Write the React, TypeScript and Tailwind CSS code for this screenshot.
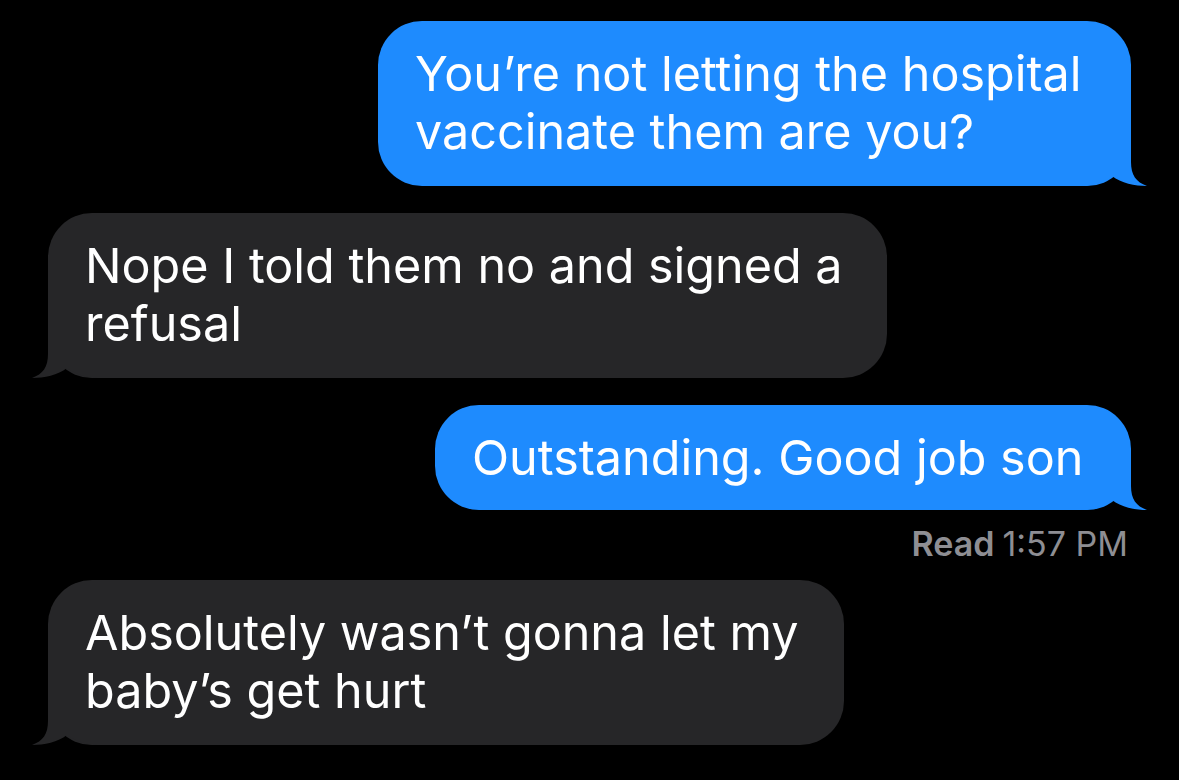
import type { ReactNode } from "react";

function Tail({ side, color }: { side: "left" | "right"; color: string }) {
  return (
    <svg
      width="67"
      height="60"
      viewBox="0 0 67 60"
      className={
        side === "right"
          ? "absolute bottom-0 right-[-16px]"
          : "absolute bottom-0 left-[-16px] -scale-x-100"
      }
    >
      <path
        d="M0,0 L51,0 L51,36 C51,49 56,56 67,60 C55,60 41,57 32,50 C24,56 12,60 0,60 Z"
        fill={color}
      />
    </svg>
  );
}

function Bubble({
  side,
  width,
  single,
  children,
}: {
  side: "left" | "right";
  width: string;
  single?: boolean;
  children: ReactNode;
}) {
  const blue = side === "right";
  return (
    <div className={blue ? "flex justify-end" : "flex justify-start"}>
      <div
        className={`relative rounded-[44px] pl-[37px] pr-6 pt-6 text-[48.5px] leading-[58px] text-white ${width} ${
          single ? "pb-[23px]" : "pb-[25px]"
        } ${blue ? "bg-[#1e8bfe]" : "bg-[#262628]"}`}
      >
        <Tail side={side} color={blue ? "#1e8bfe" : "#262628"} />
        <div className="relative whitespace-nowrap">{children}</div>
      </div>
    </div>
  );
}

export default function App() {
  return (
    <div
      className="min-h-[780px] w-[1179px] bg-black px-12 pt-[21px]"
      style={{ fontFamily: "Inter, 'Liberation Sans', sans-serif" }}
    >
      <Bubble side="right" width="w-[753px]">
        You’re not letting the hospital
        <br />
        vaccinate them are you?
      </Bubble>
      <div className="mt-[27px]">
        <Bubble side="left" width="w-[839px]">
          Nope I told them no and signed a
          <br />
          refusal
        </Bubble>
      </div>
      <div className="mt-[27px]">
        <Bubble side="right" width="w-[696px]" single>
          Outstanding. Good job son
        </Bubble>
      </div>
      <div className="mt-[14px] mb-[16px] flex justify-end pr-[3px] text-[34px] leading-[40px] text-[#8e8e93]">
        <span className="font-semibold">Read</span>
        <span className="ml-[8px]">1:57 PM</span>
      </div>
      <Bubble side="left" width="w-[796px]">
        Absolutely wasn’t gonna let my
        <br />
        baby’s get hurt
      </Bubble>
    </div>
  );
}
